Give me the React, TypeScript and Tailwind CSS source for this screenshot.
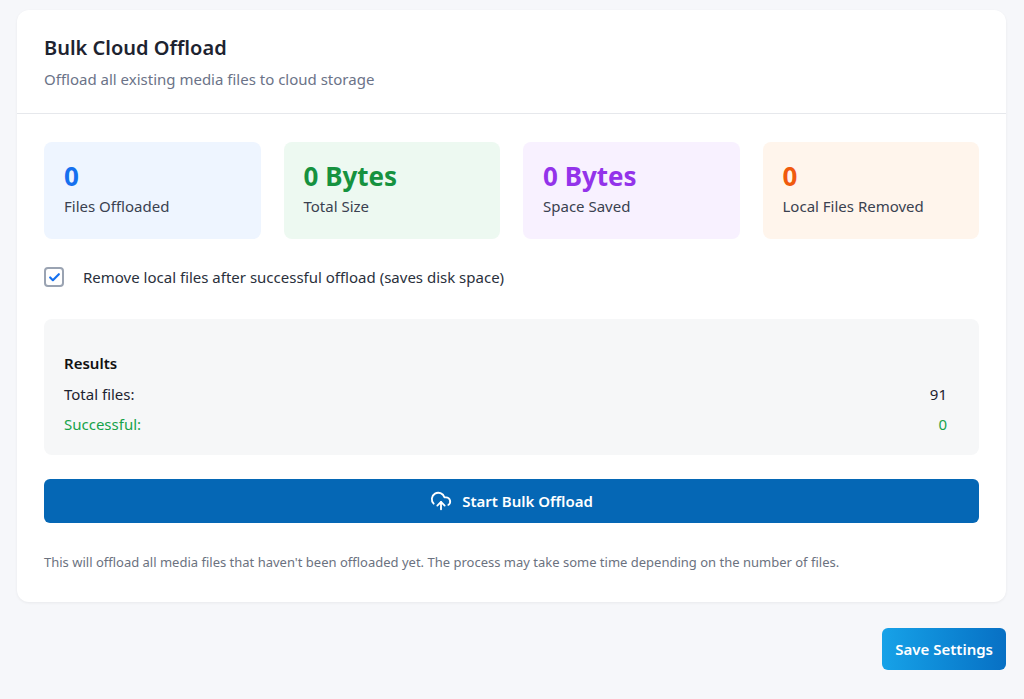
import React from "react";
import { CloudUpload } from "lucide-react";

const stats = [
  { value: "0", label: "Files Offloaded", box: "bg-[#eef5ff]", text: "text-[#1570ef]" },
  { value: "0 Bytes", label: "Total Size", box: "bg-[#edf9f1]", text: "text-[#16923f]" },
  { value: "0 Bytes", label: "Space Saved", box: "bg-[#f8f1ff]", text: "text-[#9333ea]" },
  { value: "0", label: "Local Files Removed", box: "bg-[#fff5ec]", text: "text-[#f05a0e]" },
];

export default function App() {
  return (
    <div className="min-h-[699px] bg-[#f6f7fa] pt-[10px] pl-[17px] pr-[18px] font-['Open_Sans',sans-serif] text-[#1d2330]">
      <div className="rounded-xl bg-white shadow-[0_1px_3px_rgba(0,0,0,0.06)]">
        <div className="border-b border-[#e6e8ec] px-[27px] pt-[24px] pb-[23px]">
          <h2 className="text-[20px] font-semibold leading-[28px]">Bulk Cloud Offload</h2>
          <p className="mt-[6px] text-[15px] leading-[22px] text-[#6b7388]">Offload all existing media files to cloud storage</p>
        </div>
        <div className="px-[27px] pt-[28px] pb-[30px]">
          <div className="grid grid-cols-4 gap-[23px]">
            {stats.map((s, i) => (
              <div key={i} className={`h-[97px] rounded-lg px-[20px] pt-[17px] ${s.box}`}>
                <div className={`text-[26px] font-bold leading-[34px] ${s.text}`}>{s.value}</div>
                <div className="mt-[2px] text-[15px] leading-[22px] text-[#3a4150]">{s.label}</div>
              </div>
            ))}
          </div>
          <label className="mt-[27px] flex items-center gap-[19px] text-[15px] leading-[22px] text-[#2a303c]">
            <span className="flex h-[20px] w-[20px] items-center justify-center rounded-[4px] border-2 border-[#9aa3b2] bg-white">
              <svg width="13" height="13" viewBox="0 0 24 24" fill="none" stroke="#1570ef" strokeWidth="4" strokeLinecap="round" strokeLinejoin="round"><path d="M4 12l5 5L20 6" /></svg>
            </span>
            Remove local files after successful offload (saves disk space)
          </label>
          <div className="mt-[31px] rounded-lg bg-[#f6f7f8] px-[20px] pt-[33px] pb-[20px] text-[15px] leading-[22px]">
            <div className="font-semibold text-[#111]">Results</div>
            <div className="mt-[9px] flex justify-between pr-[12px]"><span>Total files:</span><span>91</span></div>
            <div className="mt-[8px] flex justify-between pr-[12px] text-[#16a34a]"><span>Successful:</span><span>0</span></div>
          </div>
          <button className="mt-[24px] flex h-[44px] w-full items-center justify-center gap-[10px] rounded-md bg-[#0567b5] text-[15px] font-semibold text-white">
            <CloudUpload size={22} strokeWidth={2} />
            Start Bulk Offload
          </button>
          <p className="mt-[29px] text-[13px] leading-[20px] text-[#6b7280]">This will offload all media files that haven't been offloaded yet. The process may take some time depending on the number of files.</p>
        </div>
      </div>
      <div className="mt-[26px] flex justify-end">
        <button className="h-[42px] rounded-md bg-gradient-to-r from-[#17a2e8] to-[#0870c4] px-[13px] text-[15px] font-semibold text-white">Save Settings</button>
      </div>
    </div>
  );
}
